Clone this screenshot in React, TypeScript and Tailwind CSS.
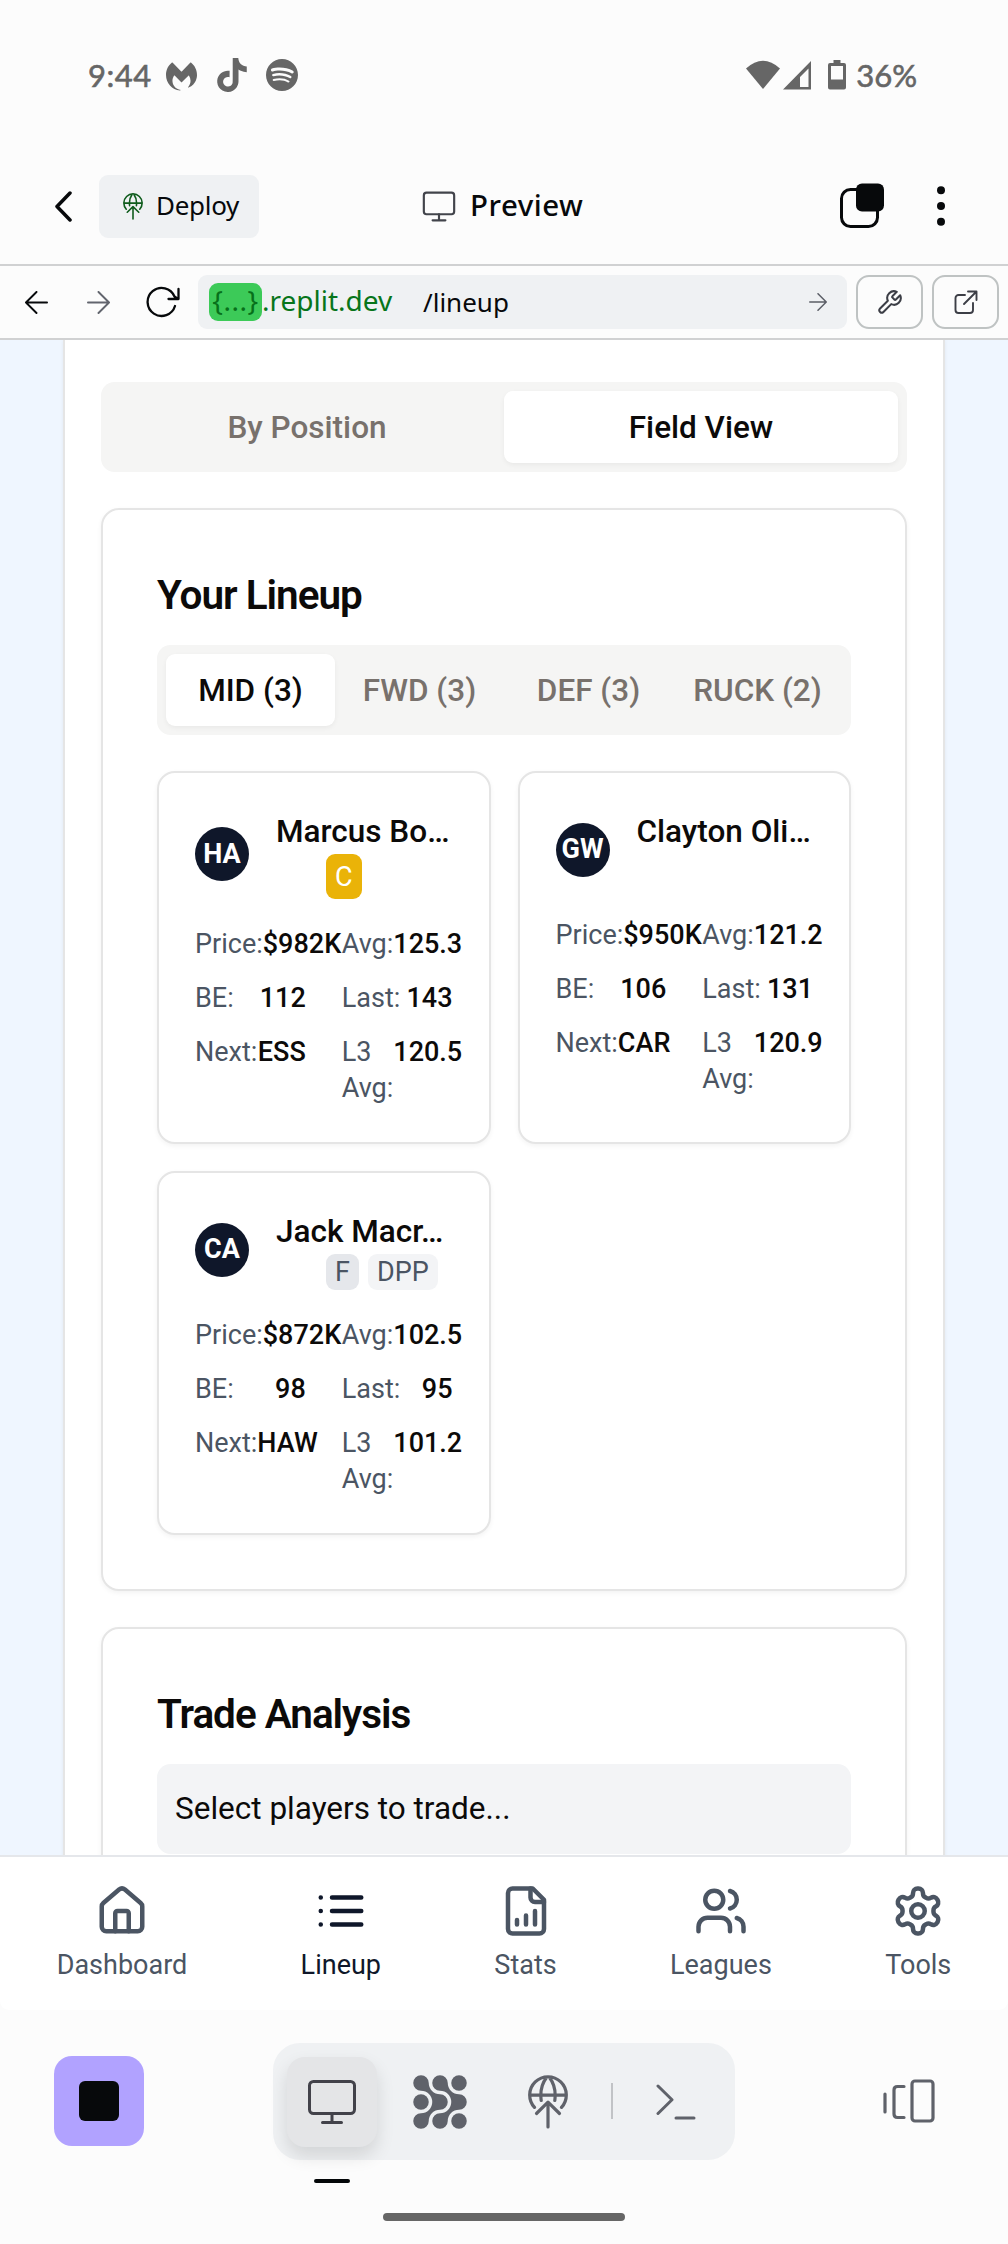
import type { ReactNode } from "react";
import { SiMalwarebytes, SiTiktok, SiSpotify } from "react-icons/si";

type IconProps = { className?: string };

function DeployIcon({ className }: IconProps) {
  return (
    <svg viewBox="0 0 40 54" fill="none" stroke="currentColor" strokeWidth="3.2" strokeLinecap="round" strokeLinejoin="round" className={className}>
      <path d="M6.5 32.4A18.3 18.3 0 1 1 33.5 32.4M2 20.2h36M18.2 3C14.4 8 12 16 13.2 25.5M21.8 3C25.6 8 28 16 26.8 25.5" />
      <path d="M20 52V27.5M8.500 38.500L20 27.200l11.500 11.300" />
    </svg>
  );
}

function MonitorIcon({ className, strokeWidth = 3 }: IconProps & { strokeWidth?: number }) {
  return (
    <svg viewBox="0 0 50 46" fill="none" stroke="currentColor" strokeWidth={strokeWidth} strokeLinecap="round" className={className}>
      <rect x="2.5" y="2.5" width="45" height="32" rx="4" />
      <path d="M25 34.500v9M15.500 43.500h19" />
    </svg>
  );
}

function NavIcon({ children }: { children: ReactNode }) {
  return (
    <svg viewBox="0 0 24 24" fill="none" stroke="currentColor" strokeWidth="2" strokeLinecap="round" strokeLinejoin="round" className="size-[54px]">
      {children}
    </svg>
  );
}

function Arrow({ className }: IconProps) {
  return (
    <svg viewBox="0 0 24 24" fill="none" stroke="currentColor" strokeWidth="2" strokeLinecap="round" strokeLinejoin="round" className={className}>
      <path d="M1 12h22M12 1l11 11-11 11" />
    </svg>
  );
}

function StatusBar() {
  return (
    <div className="flex h-[150px] items-center pl-[88px] pr-[91px] text-[#666]">
      <span className="w-[78px] font-[Lato] text-[31px] leading-[36px] tracking-[0.5px] [-webkit-text-stroke:0.6px_#666]">9:44</span>
      <SiMalwarebytes className="mt-0.5 size-[31px]" />
      <SiTiktok className="ml-[18px] size-[34px]" />
      <SiSpotify className="ml-[17px] size-8" />
      <svg viewBox="0 0 100 30" fill="currentColor" className="ml-auto h-[30px] w-[100px]">
        <path d="M0 8.500Q17-7 34 8.500L17 29Z" />
        <path fillRule="evenodd" d="M37 29.500L65 1v28.500ZM54 27h8.500V8.500L54 17Z" />
        <path fillRule="evenodd" d="M87.500 0h7v3h3.500q2 0 2 2v22.500q0 2-2 2H84q-2 0-2-2V5q0-2 2-2h3.500ZM85 6v13.500h12V6Z" />
      </svg>
      <span className="ml-[10px] font-[Lato] text-[31px] leading-[36px] [-webkit-text-stroke:0.6px_#666]">36%</span>
    </div>
  );
}

function AppHeader() {
  return (
    <div className="flex h-[114px] items-center pb-[2px] pl-[54px] pr-[62px] text-[#07090b]">
      <svg viewBox="0 0 18 31" fill="none" stroke="currentColor" strokeWidth="3.5" strokeLinecap="round" strokeLinejoin="round" className="h-[31px] w-[18px]">
        <path d="M16 2L3 15.500 16 29" />
      </svg>
      <div className="ml-[27px] flex h-[63px] w-[160px] items-center rounded-[9px] bg-[#eff1f3] pl-6">
        <DeployIcon className="h-[27px] w-5 text-[#0f5c1c]" />
        <span className="ml-[13px] pb-0.5 font-['Noto_Sans'] text-[26px] tracking-[-0.3px]">Deploy</span>
      </div>
      <div className="ml-[163px] flex items-center">
        <MonitorIcon strokeWidth={3.2} className="h-[31px] w-[34px] text-[#42444b]" />
        <span className="ml-[14px] pb-0.5 font-['Noto_Sans'] text-[29.5px] font-medium tracking-[0.5px]">Preview</span>
      </div>
      <svg viewBox="0 0 44 46" className="ml-auto h-[46px] w-11">
        <rect x="1.5" y="6.5" width="36" height="37" rx="9" fill="none" stroke="currentColor" strokeWidth="3" />
        <rect x="16" y="0.5" width="28" height="28" rx="6" fill="currentColor" />
      </svg>
      <svg viewBox="0 0 10 40" fill="currentColor" className="ml-[52px] h-10 w-[10px]">
        <circle cx="5" cy="4.2" r="4" />
        <circle cx="5" cy="20" r="4" />
        <circle cx="5" cy="35.8" r="4" />
      </svg>
    </div>
  );
}

function UrlBar() {
  return (
    <div className="flex h-[76px] items-center border-y-2 border-[#d0d1d2] pl-[25px] pr-[9px] text-[#07090b]">
      <Arrow className="size-[23px] rotate-180" />
      <Arrow className="ml-[39px] size-[23px] text-[#62656e]" />
      <svg viewBox="0 0 34 32" fill="none" stroke="currentColor" strokeWidth="2.3" strokeLinecap="round" strokeLinejoin="round" className="ml-[36px] h-8 w-[34px]">
        <path d="M29 20A14 14 0 1 1 28.500 10.500L32 13M32.500 3v10h-10" />
      </svg>
      <div className="ml-[18px] flex h-[54px] w-[649px] items-center rounded-[9px] bg-[#eff1f3] pl-[11px] pr-[20px] font-['Noto_Sans'] text-[28px]">
        <span className="flex h-[38px] w-[53px] items-center justify-center rounded-[9px] bg-[#3cca58] pb-1 tracking-[0.5px] text-[#07701a]">{"{...}"}</span>
        <span className="w-[161px] pb-1 text-[#07751a]">.replit.dev</span>
        <span className="text-[26px]">/lineup</span>
        <Arrow className="ml-auto size-[18px] text-[#5b5e66]" />
      </div>
      <div className="ml-[9px] flex h-[54px] w-[67px] items-center justify-center rounded-[13px] border-2 border-[#bfc3c3] text-[#3c3e46]">
        <svg viewBox="0 0 24 24" fill="none" stroke="currentColor" strokeWidth="1.8" strokeLinejoin="round" className="size-[27px]">
          <path d="M14.700 6.300a1 1 0 0 0 0 1.400l1.600 1.600a1 1 0 0 0 1.400 0l3.770-3.770a6 6 0 0 1-7.940 7.940l-6.910 6.910a2.120 2.120 0 0 1-3-3l6.910-6.910a6 6 0 0 1 7.940-7.940l-3.760 3.760z" />
        </svg>
      </div>
      <div className="ml-[9px] flex h-[54px] w-[67px] items-center justify-center rounded-[13px] border-2 border-[#bfc3c3] text-[#3c3e46]">
        <svg viewBox="0 0 24 24" fill="none" stroke="currentColor" strokeWidth="1.9" strokeLinecap="round" strokeLinejoin="round" className="size-6">
          <path d="M14 1.500h8.500V10M22.500 1.500L10 14M11 5H4.500a3 3 0 0 0-3 3v12a3 3 0 0 0 3 3H16a3 3 0 0 0 3-3v-7" />
        </svg>
      </div>
    </div>
  );
}

function Tabs({ items, active }: { items: string[]; active: number }) {
  return (
    <div className="flex h-[90px] rounded-[13.5px] bg-[#f5f5f4] p-[9px]">
      {items.map((item, i) => (
        <div
          key={item}
          className={
            i === active
              ? "flex flex-1 items-center justify-center rounded-[9px] bg-white pt-px text-[31.5px] font-medium whitespace-nowrap text-[#0c0a09] shadow-[0_2px_5px_rgba(0,0,0,0.05)]"
              : "flex flex-1 items-center justify-center pt-px text-[31.5px] font-medium whitespace-nowrap text-[#78716c]"
          }
        >
          {item}
        </div>
      ))}
    </div>
  );
}

type Player = {
  team: string;
  name: string;
  badges: { text: string; kind: "captain" | "role" | "dual" }[];
  stats: [string, string][];
};

const players: Player[] = [
  {
    team: "HA",
    name: "Marcus Bo…",
    badges: [{ text: "C", kind: "captain" }],
    stats: [["Price:", "$982K"], ["Avg:", "125.3"], ["BE:", "112"], ["Last:", "143"], ["Next:", "ESS"], ["L3 Avg:", "120.5"]],
  },
  {
    team: "GW",
    name: "Clayton Oli…",
    badges: [],
    stats: [["Price:", "$950K"], ["Avg:", "121.2"], ["BE:", "106"], ["Last:", "131"], ["Next:", "CAR"], ["L3 Avg:", "120.9"]],
  },
  {
    team: "CA",
    name: "Jack Macr…",
    badges: [{ text: "F", kind: "role" }, { text: "DPP", kind: "dual" }],
    stats: [["Price:", "$872K"], ["Avg:", "102.5"], ["BE:", "98"], ["Last:", "95"], ["Next:", "HAW"], ["L3 Avg:", "101.2"]],
  },
];

const badgeStyles = {
  captain: "rounded-[9px] bg-[#eab308] px-[9px] py-[4.5px] text-white",
  role: "rounded-[9px] bg-gray-200 px-[9px] text-[#4b5563]",
  dual: "rounded-[9px] bg-gray-100 px-[9px] text-[#4b5563]",
};

function PlayerCard({ player }: { player: Player }) {
  return (
    <div className="rounded-[18px] border-2 border-[#e5e5e5] bg-white p-9 shadow-[0_2px_5px_rgba(0,0,0,0.05)]">
      <div className="mb-[27px] flex items-center">
        <div className="flex size-[54px] shrink-0 items-center justify-center rounded-full bg-[#0f172a] text-[27px] leading-none font-bold text-white">
          {player.team}
        </div>
        <div className="ml-[27px] min-w-0 flex-1">
          <div className="text-[31.5px] leading-[45px] font-medium whitespace-nowrap">{player.name}</div>
          <div className="ml-[50px] flex min-h-9 gap-[9px] text-[27px] leading-9">
            {player.badges.map((b) => (
              <span key={b.text} className={badgeStyles[b.kind]}>{b.text}</span>
            ))}
          </div>
        </div>
      </div>
      <div className="grid grid-cols-2 gap-x-9 gap-y-[18px] text-[27px] leading-9">
        {player.stats.map(([label, value]) => (
          <div key={label} className="flex min-w-0 justify-between">
            <span className="text-[#4b5563]">{label}</span>
            <span className="font-medium">{value}</span>
          </div>
        ))}
      </div>
    </div>
  );
}

const cardClass = "rounded-[18px] border-2 border-[#e5e5e5] bg-white p-[54px] shadow-[0_2px_5px_rgba(0,0,0,0.05)]";
const titleClass = "text-[40.5px] leading-[63px] font-semibold tracking-[-0.025em]";

function LineupPage() {
  return (
    <div className="h-[1515px] overflow-hidden bg-[#eff6ff] px-[63px] text-[#0c0a09]">
      <div className="min-h-full border-x-2 border-[#e5e5e5] bg-white px-9 pt-[42px] shadow-[0_0_4px_rgba(0,0,0,0.06)]">
        <Tabs items={["By Position", "Field View"]} active={1} />
        <div className={`mt-9 ${cardClass}`}>
          <h2 className={titleClass}>Your Lineup</h2>
          <div className="mt-[18px]">
            <Tabs items={["MID (3)", "FWD (3)", "DEF (3)", "RUCK (2)"]} active={0} />
          </div>
          <div className="mt-9 grid grid-cols-2 gap-[27px]">
            {players.map((p) => (
              <PlayerCard key={p.team} player={p} />
            ))}
          </div>
        </div>
        <div className={`mt-9 ${cardClass}`}>
          <h2 className={titleClass}>Trade Analysis</h2>
          <div className="mt-[18px] flex h-[90px] items-center rounded-[13.5px] bg-[#f3f4f6] px-[18px] text-[31.5px]">
            Select players to trade...
          </div>
        </div>
      </div>
    </div>
  );
}

function BottomNav() {
  const items: { label: string; icon: ReactNode; active?: boolean }[] = [
    {
      label: "Dashboard",
      icon: (
        <>
          <path d="M15 21v-8a1 1 0 0 0-1-1h-4a1 1 0 0 0-1 1v8" />
          <path d="M3 10a2 2 0 0 1 .709-1.528l7-5.999a2 2 0 0 1 2.582 0l7 5.999A2 2 0 0 1 21 10v9a2 2 0 0 1-2 2H5a2 2 0 0 1-2-2z" />
        </>
      ),
    },
    { label: "Lineup", active: true, icon: <path d="M3 6h.01M3 12h.01M3 18h.01M8 6h13M8 12h13M8 18h13" /> },
    {
      label: "Stats",
      icon: (
        <>
          <path d="M15 2H6a2 2 0 0 0-2 2v16a2 2 0 0 0 2 2h12a2 2 0 0 0 2-2V7Z" />
          <path d="M14 2v4a2 2 0 0 0 2 2h4M8 18v-2M12 18v-4M16 18v-6" />
        </>
      ),
    },
    {
      label: "Leagues",
      icon: (
        <>
          <path d="M16 21v-2a4 4 0 0 0-4-4H6a4 4 0 0 0-4 4v2" />
          <circle cx="9" cy="7" r="4" />
          <path d="M22 21v-2a4 4 0 0 0-3-3.870M16 3.130a4 4 0 0 1 0 7.750" />
        </>
      ),
    },
    {
      label: "Tools",
      icon: (
        <>
          <path d="M12.220 2h-.44a2 2 0 0 0-2 2v.18a2 2 0 0 1-1 1.730l-.43.25a2 2 0 0 1-2 0l-.15-.08a2 2 0 0 0-2.730.73l-.22.38a2 2 0 0 0 .73 2.730l.15.1a2 2 0 0 1 1 1.720v.51a2 2 0 0 1-1 1.740l-.15.09a2 2 0 0 0-.73 2.730l.22.38a2 2 0 0 0 2.730.73l.15-.08a2 2 0 0 1 2 0l.43.25a2 2 0 0 1 1 1.730V20a2 2 0 0 0 2 2h.44a2 2 0 0 0 2-2v-.18a2 2 0 0 1 1-1.730l.43-.25a2 2 0 0 1 2 0l.15.08a2 2 0 0 0 2.730-.73l.22-.39a2 2 0 0 0-.73-2.730l-.15-.08a2 2 0 0 1-1-1.740v-.5a2 2 0 0 1 1-1.740l.15-.09a2 2 0 0 0 .73-2.730l-.22-.38a2 2 0 0 0-2.730-.73l-.15.08a2 2 0 0 1-2 0l-.43-.25a2 2 0 0 1-1-1.730V4a2 2 0 0 0-2-2z" />
          <circle cx="12" cy="12" r="3" />
        </>
      ),
    },
  ];
  return (
    <div className="flex h-[155px] justify-around rounded-b-[9px] border-t-2 border-gray-200 bg-white pt-[27px]">
      {items.map((item) => (
        <div key={item.label} className={item.active ? "flex flex-col items-center text-[#0f172a]" : "flex flex-col items-center text-[#4b5563]"}>
          <NavIcon>{item.icon}</NavIcon>
          <span className="mt-[9px] text-[27px] leading-9">{item.label}</span>
        </div>
      ))}
    </div>
  );
}

const swirl =
  "M8 .25A7.750 7.750 0 0 1 15.750 8A11.250 11.250 0 0 0 27 19.250A7.750 7.750 0 0 1 27 34.750A11.250 11.250 0 0 0 15.750 46A7.750 7.750 0 0 1 8 53.750A7.750 7.750 0 0 1 8 38.250A11.250 11.250 0 0 0 8 15.750A7.750 7.750 0 0 1 8 .25Z";

function Dock() {
  return (
    <div className="flex h-[150px] items-start pt-[33px] pl-[54px] pr-[73px]">
      <div className="mt-[13px] flex size-[90px] items-center justify-center rounded-[18px] bg-[#b1a2ff]">
        <div className="size-10 rounded-[6px] bg-[#07090b]" />
      </div>
      <div className="ml-[129px] flex h-[117px] w-[462px] items-center gap-[18px] rounded-[27px] bg-[#eff1f3] px-[14px] text-[#5f626a]">
        <div className="relative flex size-[90px] shrink-0 items-center justify-center rounded-[18px] bg-[#e4e5e7] shadow-[0_9px_18px_rgba(0,0,0,0.12)]">
          <MonitorIcon className="h-[46px] w-[50px] text-[#42424a]" />
          <div className="absolute top-[122px] h-1 w-9 rounded-full bg-[#030608]" />
        </div>
        <div className="flex size-[90px] shrink-0 items-center justify-center">
          <svg viewBox="0 0 54 54" fill="currentColor" className="size-[54px]">
            <path d={swirl} />
            <path d={swirl} transform="translate(19 0)" />
            <circle cx="8" cy="27" r="7.75" />
            <circle cx="46" cy="8" r="7.75" />
            <circle cx="46" cy="46" r="7.75" />
          </svg>
        </div>
        <div className="flex size-[90px] shrink-0 items-center justify-center">
          <DeployIcon className="h-[54px] w-10" />
        </div>
        <div className="-mt-0.5 h-9 w-0.5 shrink-0 bg-[#c1c3c6]" />
        <div className="flex size-[90px] shrink-0 items-center justify-center">
          <svg viewBox="0 0 40 36" fill="none" stroke="currentColor" strokeWidth="3" strokeLinecap="round" strokeLinejoin="round" className="h-9 w-10">
            <path d="M2 2l14 13.700L2 29.500M20 34h18" />
          </svg>
        </div>
      </div>
      <svg viewBox="0 0 52 44" fill="none" stroke="currentColor" strokeWidth="3.2" strokeLinecap="round" strokeLinejoin="round" className="mt-[36px] ml-auto h-11 w-[52px] text-[#5f626a]">
        <path d="M2 15v18M21 7.500h-6.500q-3.500 0-3.500 3.500v24q0 3.500 3.500 3.500H21" />
        <rect x="29" y="2" width="21" height="40" rx="3" />
      </svg>
    </div>
  );
}

export default function App() {
  return (
    <div className="h-[2244px] w-[1008px] overflow-hidden bg-[#fcfcfc] font-[Roboto,sans-serif]">
      <StatusBar />
      <AppHeader />
      <UrlBar />
      <LineupPage />
      <BottomNav />
      <Dock />
      <div className="mx-auto mt-[53px] h-2 w-[242px] rounded-full bg-[#666]" />
    </div>
  );
}
